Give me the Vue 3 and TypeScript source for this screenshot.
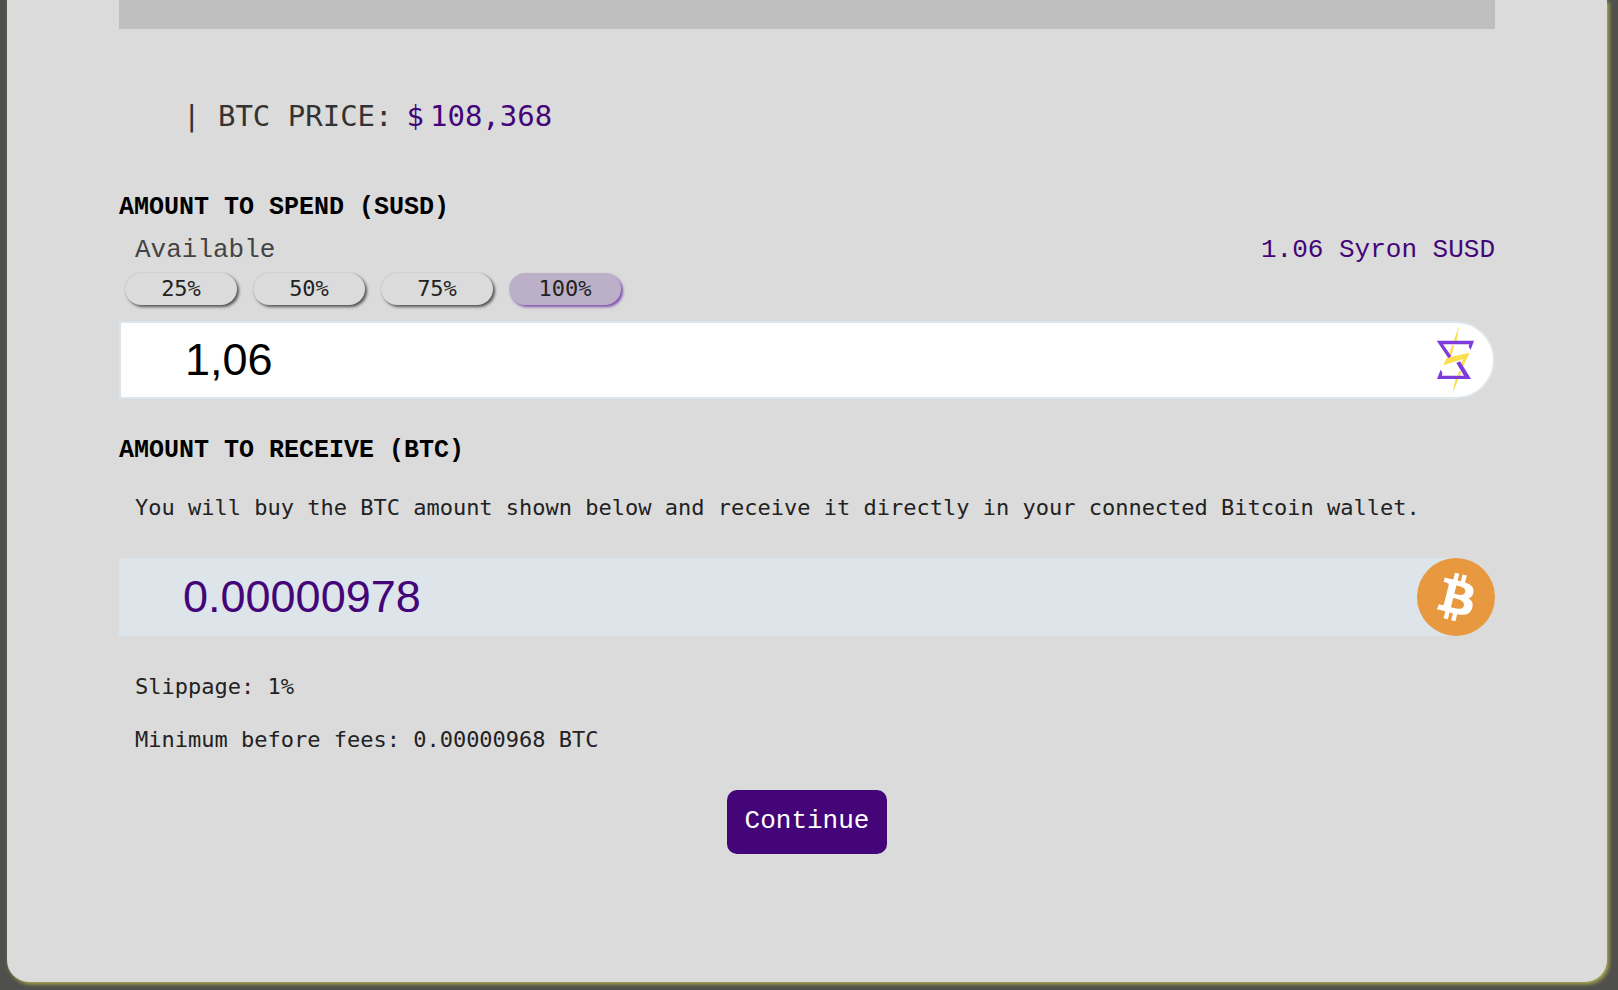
<script setup lang="ts">
import { computed, ref } from 'vue'

const shares = [25, 50, 75, 100]
const selected = ref(100)
const balance = 1.06
const amount = ref('1,06')
const price = '108,368'
const received = '0.00000978'
const minimum = computed(() => (Math.floor(Number(received) * 0.99 * 1e8) / 1e8).toFixed(8))

function pick(share: number) {
  selected.value = share
  amount.value = ((balance * share) / 100).toFixed(2).replace('.', ',')
}
</script>

<template>
  <main class="page">
    <section class="panel">
      <div class="strip"></div>

      <p class="price">
        <span>| BTC PRICE:</span>
        <span class="value"><span class="sign">$</span>{{ price }}</span>
      </p>

      <label class="title" for="spend">AMOUNT TO SPEND (SUSD)</label>
      <div class="balance">
        <span>Available</span>
        <span class="value">1.06 Syron SUSD</span>
      </div>
      <div class="shares">
        <button
          v-for="share in shares"
          :key="share"
          type="button"
          class="share"
          :class="{ active: share === selected }"
          @click="pick(share)"
        >{{ share }}%</button>
      </div>
      <div class="field">
        <input id="spend" v-model="amount" class="amount" type="text" inputmode="decimal" />
        <svg class="syron" viewBox="585 312 126 216" aria-hidden="true">
          <g fill="#fbe04c">
            <path d="M657 318L650 362H641ZM636 376H643L634 408L627 403ZM658 450L663 456L661 467H653ZM646 477H655L637 522Z" />
            <path d="M689 398L669 440L662 433L670 417L610 436L620 413Z" />
          </g>
          <g fill="#7d3bdc">
            <path d="M590 362H702L692 389L686 380L688 373H609L634 409L625 414Z" />
            <path d="M693 477H591L602 449L607 458L606 467H672L649 429L660 424Z" />
          </g>
        </svg>
      </div>

      <h2 class="title receive">AMOUNT TO RECEIVE (BTC)</h2>
      <p class="note">You will buy the BTC amount shown below and receive it directly in your connected Bitcoin wallet.</p>
      <div class="result">
        <output class="received">{{ received }}</output>
        <svg class="bitcoin" viewBox="0 0 32 32" aria-hidden="true">
          <circle cx="16" cy="16" r="16" fill="#e8983e" />
          <path fill="#fff" d="M23.189 14.02c.314-2.096-1.283-3.223-3.465-3.975l.708-2.84-1.728-.43-.69 2.765c-.454-.114-.92-.22-1.385-.326l.695-2.783L15.596 6l-.708 2.839c-.376-.086-.746-.17-1.104-.26l.002-.009-2.384-.595-.46 1.846s1.283.294 1.256.312c.7.175.826.638.805 1.006l-.806 3.235c.048.012.11.03.18.057l-.183-.045-1.13 4.532c-.086.212-.303.531-.793.41.018.025-1.256-.313-1.256-.313l-.858 1.978 2.25.561c.418.105.828.215 1.231.318l-.715 2.872 1.727.43.708-2.84c.472.127.93.245 1.378.357l-.706 2.828 1.728.43.715-2.866c2.948.558 5.164.333 6.097-2.333.752-2.146-.037-3.385-1.588-4.192 1.13-.26 1.98-1.003 2.207-2.538zm-3.95 5.538c-.533 2.147-4.148.986-5.32.695l.95-3.805c1.172.293 4.929.872 4.37 3.11zm.535-5.569c-.487 1.953-3.495.96-4.47.717l.86-3.45c.975.243 4.118.696 3.61 2.733z" />
        </svg>
      </div>

      <div class="details">
        <p>Slippage: 1%</p>
        <p>Minimum before fees: {{ minimum }} BTC</p>
      </div>

      <button type="button" class="continue">Continue</button>
    </section>
  </main>
</template>

<style>
body {
  background: #4f4f4d;
}
</style>

<style scoped>
.page {
  box-sizing: border-box;
  min-height: 100vh;
  padding: 0 11px 8px 7px;
}

.panel {
  display: flex;
  flex-direction: column;
  padding: 0 112px 128px;
  border-radius: 0 0 22px 22px;
  background: #dbdbdb;
  box-shadow: 2px 2px 4px #b0b050;
  color: #222;
  font-family: "DejaVu Sans Mono", monospace;
  font-size: 22px;
  line-height: 32px;
}

p,
h2 {
  margin: 0;
}

.strip {
  height: 29px;
  background: #bfbfbf;
}

.price {
  display: flex;
  gap: 14px;
  margin-top: 68px;
  padding-left: 64px;
  color: #333;
  font-size: 29px;
  line-height: 38px;
}

.value {
  color: #430578;
}

.sign {
  margin-right: 6px;
}

.title {
  margin-top: 57px;
  color: #000;
  font-family: "Liberation Mono", monospace;
  font-size: 25px;
  font-weight: 700;
  line-height: 32px;
}

.balance {
  display: flex;
  justify-content: space-between;
  margin-top: 10px;
  padding-left: 16px;
  color: #444;
  font-family: "Liberation Mono", monospace;
  font-size: 26px;
}

.balance .value {
  color: #430578;
}

.shares {
  display: flex;
  gap: 16px;
  margin-top: 7px;
  padding-left: 6px;
}

.share {
  width: 112px;
  height: 32px;
  padding: 0;
  border: 0;
  border-radius: 16px;
  background: #dbdbdb;
  box-shadow: 2px 2px 3px #555, 0 0 1px #aaa;
  color: #222;
  font: inherit;
  cursor: pointer;
}

.share.active {
  background: #bcb0c8;
  box-shadow: 2px 2px 3px #8050b0;
}

.field {
  display: flex;
  align-items: center;
  box-sizing: border-box;
  height: 78px;
  margin-top: 16px;
  padding-right: 16px;
  border: 2px solid #dde4ea;
  border-radius: 0 39px 39px 0;
  background: #fff;
}

.amount {
  flex: 1;
  min-width: 0;
  padding: 0 0 0 64px;
  border: 0;
  outline: 0;
  background: transparent;
  color: #000;
  font-family: "Liberation Sans", Arial, sans-serif;
  font-size: 45px;
}

.syron {
  width: 42px;
  height: 72px;
}

.receive {
  margin-top: 36px;
}

.note {
  margin-top: 25px;
  padding-left: 16px;
}

.result {
  display: flex;
  align-items: center;
  justify-content: space-between;
  height: 78px;
  margin-top: 34px;
  padding-left: 64px;
  border-radius: 0 39px 39px 0;
  background: #dde4ea;
}

.received {
  color: #430578;
  font-family: "Liberation Sans", Arial, sans-serif;
  font-size: 45px;
}

.bitcoin {
  width: 78px;
  height: 78px;
}

.details {
  display: grid;
  gap: 21px;
  margin-top: 35px;
  padding-left: 16px;
}

.continue {
  align-self: center;
  width: 160px;
  height: 64px;
  margin-top: 34px;
  padding: 0 0 2px;
  border: 0;
  border-radius: 10px;
  background: #430578;
  color: #fff;
  font-family: "Liberation Mono", monospace;
  font-size: 26px;
  cursor: pointer;
}
</style>
